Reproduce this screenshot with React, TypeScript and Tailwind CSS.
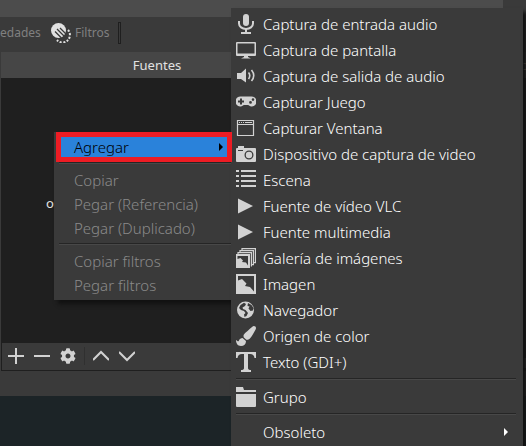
import type { ReactNode } from "react";
import { FaCog, FaPaintBrush } from "react-icons/fa";

function Svg({ children }: { children: ReactNode }) {
  return (
    <svg viewBox="0 0 20 20" className="size-5" fill="currentColor" aria-hidden="true">
      {children}
    </svg>
  );
}

const mic = (
  <Svg>
    <rect x="7" y="0" width="6" height="12" rx="3" />
    <path d="M3 7v2.500a7 5.500 0 0 0 14 0V7" fill="none" stroke="currentColor" strokeWidth="2" />
    <path d="M9 15h2v3h4v2H5v-2h4z" />
  </Svg>
);
const monitor = (
  <Svg>
    <path fillRule="evenodd" d="M1 2h18a1 1 0 0 1 1 1v12a1 1 0 0 1-1 1H1a1 1 0 0 1-1-1V3a1 1 0 0 1 1-1zm.5 1.500v10h17v-10z" />
    <path d="M8 16h4v1l3 1.500H5L8 17z" />
  </Svg>
);
const speaker = (
  <Svg>
    <path d="M1 7h4l5-4.500v14L5 13H1z" />
    <path d="M12.500 6.500q2.500 3 0 6.500M15.500 4q4.500 5.500 0 11" fill="none" stroke="currentColor" strokeWidth="1.600" />
  </Svg>
);
const gamepad = (
  <Svg>
    <path
      fillRule="evenodd"
      d="M5 4.500h10a5 5 0 0 1 1 10c-2 .5-3-1.500-4-1.500H8c-1 0-2 2-4 1.500a5 5 0 0 1 1-10zM4 6.500v2H2v2h2v2h2v-2h2v-2H6v-2zm10.500 2.500a1.400 1.400 0 1 0 0 2.800 1.400 1.400 0 0 0 0-2.800zM17 6.300a1.300 1.300 0 1 0 0 2.600 1.300 1.300 0 0 0 0-2.600z"
    />
  </Svg>
);
const windowIcon = (
  <Svg>
    <path d="M1.500 2.500h16v15h-16zM1.500 6.500h16" fill="none" stroke="currentColor" strokeWidth="1.200" />
    <path d="M3 4h1v1H3zM5 4h1v1H5zM7 4h1v1H7zM9 4h7v1H9z" />
  </Svg>
);
const camera = (
  <Svg>
    <path fillRule="evenodd" d="M2 2h6v2h11a1 1 0 0 1 1 1v12a1 1 0 0 1-1 1H1a1 1 0 0 1-1-1V5a1 1 0 0 1 1-1h1zm0 4v1h5V6zm11 .5a4.500 4.500 0 1 0 0 9 4.500 4.500 0 0 0 0-9zm0 1.300a3.200 3.200 0 1 1 0 6.400 3.200 3.200 0 0 1 0-6.400z" />
  </Svg>
);
const list = (
  <Svg>
    <path d="M0 0h3v2H0zM0 5h3v2H0zM0 10h3v2H0zM0 15h3v2H0zM5 0h15v2H5zM5 5h15v2H5zM5 10h15v2H5zM5 15h15v2H5z" />
  </Svg>
);
const play = (
  <Svg>
    <path d="M2 2.500 17 10 2 17.500z" />
  </Svg>
);
const gallery = (
  <Svg>
    <path d="M6 2V.6h13.400v14H18M4 4V2.600h13.400v14H16M2 6V4.600h13.400v14" fill="none" stroke="currentColor" strokeWidth="1.200" />
    <path fillRule="evenodd" d="M0 6h14v14H0zm1.500 2v3l3-1 2.500 2.500L6 14l4 .5 2 3V8z" />
  </Svg>
);
const image = (
  <Svg>
    <path fillRule="evenodd" d="M0 0h20v20H0zm2 2v4.500L6 5l4.500 4.500L9 12l5 1 4 4.500V2z" />
  </Svg>
);
const globe = (
  <Svg>
    <path
      fillRule="evenodd"
      d="M9.500 1.500a8.500 8.500 0 1 1 0 17 8.500 8.500 0 0 1 0-17zM8 2.800 4.500 5 3 8l2 2 3 1 1.500 2L8 14.500l.5 2.500 2-1 1.500-3-2.500-3L7 9l-.5-1.500L9 6l1-2zM12 3l-.5 3 2 .5-1 2 2 2.500 2.500-.5.500-2.500-2-3z"
    />
  </Svg>
);
const textIcon = (
  <Svg>
    <path d="M0 0h20v6h-1.500Q18 2 14 2h-2v14q0 2 3 2v2H5v-2q3 0 3-2V2H6Q2 2 1.500 6H0z" />
  </Svg>
);
const folder = (
  <Svg>
    <path d="M0 0h7l1 3h12v2H0zM0 7h20v12a1 1 0 0 1-1 1H1a1 1 0 0 1-1-1z" />
  </Svg>
);
const filters = (
  <Svg>
    <circle cx="7.500" cy="7.500" r="7.500" />
    <path d="m4 8.500 6.500 6.500M6 6l8 8M9 5l6 6" stroke="#3a3a3a" strokeWidth="1.300" />
    <path d="M17 7a7 7 0 1 1-11 10" fill="none" stroke="currentColor" strokeWidth="2" strokeDasharray="2 1.500" />
  </Svg>
);

const sources: { label: string; icon: ReactNode }[] = [
  { label: "Captura de entrada audio", icon: mic },
  { label: "Captura de pantalla", icon: monitor },
  { label: "Captura de salida de audio", icon: speaker },
  { label: "Capturar Juego", icon: gamepad },
  { label: "Capturar Ventana", icon: windowIcon },
  { label: "Dispositivo de captura de video", icon: camera },
  { label: "Escena", icon: list },
  { label: "Fuente de vídeo VLC", icon: play },
  { label: "Fuente multimedia", icon: play },
  { label: "Galería de imágenes", icon: gallery },
  { label: "Imagen", icon: image },
  { label: "Navegador", icon: globe },
  { label: "Origen de color", icon: <FaPaintBrush className="size-5" /> },
  { label: "Texto (GDI+)", icon: textIcon },
];

function SourceItem({ label, icon, submenu }: { label: string; icon?: ReactNode; submenu?: boolean }) {
  return (
    <button role="menuitem" className="flex h-[26px] w-full items-center gap-[7px] pr-[15px] pl-[5px] text-left whitespace-nowrap">
      <span className="flex size-5 items-center justify-center text-[#d2d2d2]">{icon}</span>
      <span className="flex-1">{label}</span>
      {submenu && <Arrow />}
    </button>
  );
}

function Arrow() {
  return (
    <svg viewBox="0 0 4 8" className="h-2 w-1" fill="currentColor" aria-hidden="true">
      <path d="M0 0 4 4 0 8z" />
    </svg>
  );
}

function Separator() {
  return <div role="separator" className="mt-[3px] mr-[7px] mb-1 ml-[5px] h-0.5 border-t border-[#252525] bg-[#484848]" />;
}

function ContextItem({ label }: { label: string }) {
  return (
    <button role="menuitem" disabled className="block h-6 w-full pl-5 text-left whitespace-nowrap text-[#8a8a8a]">
      {label}
    </button>
  );
}

function ToolButton({ label, children }: { label: string; children: ReactNode }) {
  return (
    <button aria-label={label} className="flex h-[26px] w-[26px] items-center justify-center">
      {children}
    </button>
  );
}

function Stroke({ d }: { d: string }) {
  return (
    <svg viewBox="0 0 16 16" className="size-4" fill="none" stroke="currentColor" strokeWidth="2" aria-hidden="true">
      <path d={d} />
    </svg>
  );
}

export default function App() {
  return (
    <div className="relative min-h-screen overflow-hidden bg-[#1c2427] font-['Noto_Sans',sans-serif] text-[#e1e1e1]">
      <main className="bg-[#3a3a3a] pb-[25px] text-[13px]">
        <div className="mr-[23px] h-[17px] bg-[#4c4c4c]" />
        <div className="flex h-[35px] items-center pb-1 text-[12px] text-[#808080]">
          <button className="w-10 text-right">edades</button>
          <button className="ml-[11px] flex items-center gap-1">
            <span className="text-[#e1e1e1]">{filters}</span>
            Filtros
          </button>
          <div className="ml-[9px] h-[22px] w-[3px] border border-[#1f1f1f]" />
        </div>
        <div className="flex">
          <section className="ml-px w-[312px] shrink-0 border-b border-[#1f1f1f]">
            <h2 className="flex h-[26px] items-center justify-center bg-[#464646] pt-0.5">Fuentes</h2>
            <div className="h-[265px] bg-[#1f1f1f] pt-[115px] pl-[45px] leading-5">o</div>
            <div className="flex h-[27px] items-start border-l border-[#1f1f1f] pl-px text-[#d2d2d2]">
              <ToolButton label="Agregar fuente">
                <Stroke d="M8 0v16M0 8h16" />
              </ToolButton>
              <ToolButton label="Quitar fuente">
                <Stroke d="M0 8h16" />
              </ToolButton>
              <ToolButton label="Configurar fuente">
                <FaCog className="size-4" />
              </ToolButton>
              <div className="mx-[3px] mt-1 h-[18px] w-px bg-[#303030]" />
              <ToolButton label="Subir">
                <Stroke d="m0 12 8-8 8 8" />
              </ToolButton>
              <ToolButton label="Bajar">
                <Stroke d="m0 4 8 8 8-8" />
              </ToolButton>
            </div>
          </section>
          <section className="ml-1 flex-1">
            <h2 className="flex h-[26px] items-center justify-end bg-[#464646] pt-0.5">c</h2>
            <div className="h-[280px] bg-[#1f1f1f]" />
            <div className="h-[13px] border-b-[3px] border-[#1f1f1f] bg-[#464646]" />
          </section>
        </div>
      </main>

      <div role="menu" className="absolute top-[132px] left-[54px] h-[168px] w-[178px] bg-[#3a3a3a] text-[15px] leading-6 font-light shadow-[4px_4px_4px_#111111]">
        <button role="menuitem" className="ml-0.5 flex h-[30px] w-44 items-center justify-between border-[5px] border-[#ed1c24] bg-[#2a82da] pr-1 pl-[13px] text-black">
          Agregar
          <Arrow />
        </button>
        <div role="separator" className="mb-1 ml-[5px] h-0.5 border-t border-[#252525] bg-[#484848]" />
        <ContextItem label="Copiar" />
        <ContextItem label="Pegar (Referencia)" />
        <ContextItem label="Pegar (Duplicado)" />
        <div role="separator" className="mt-[3px] mb-1 ml-[5px] h-0.5 border-t border-[#252525] bg-[#484848]" />
        <ContextItem label="Copiar filtros" />
        <ContextItem label="Pegar filtros" />
      </div>

      <div role="menu" className="absolute top-2 right-[3px] bottom-0 left-[231px] bg-[#3a3a3a] pt-[3px] text-[15px] leading-6 font-light text-white shadow-[4px_4px_4px_#111111]">
        {sources.map((s) => (
          <SourceItem key={s.label} label={s.label} icon={s.icon} />
        ))}
        <Separator />
        <SourceItem label="Grupo" icon={folder} />
        <Separator />
        <SourceItem label="Obsoleto" submenu />
      </div>
      {/* The highlighted entry's frame reaches one pixel over the submenu's edge. */}
      <div className="pointer-events-none absolute top-[132px] left-[231px] h-[30px] w-px bg-[#ed1c24]" />
    </div>
  );
}
